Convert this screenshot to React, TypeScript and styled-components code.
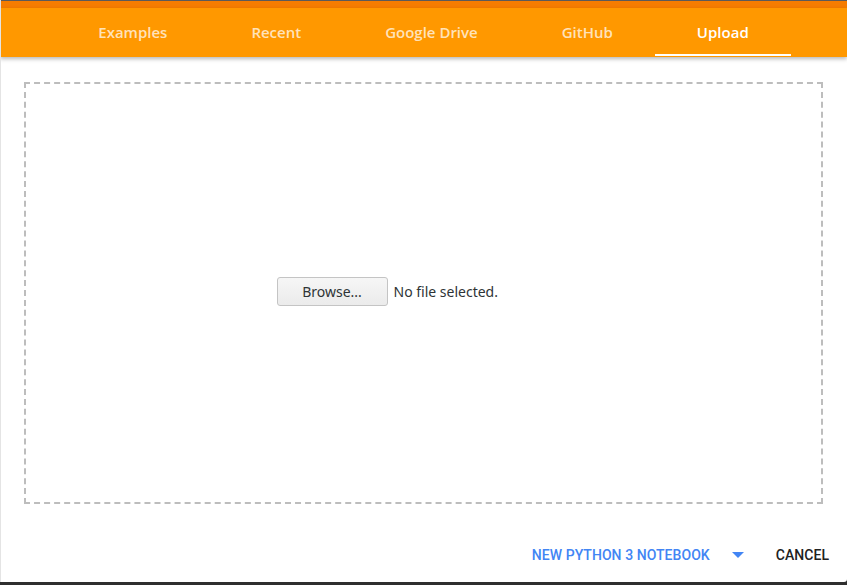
import React from 'react';
import styled, { createGlobalStyle } from 'styled-components';

const GlobalStyle = createGlobalStyle`
  html, body {
    margin: 0;
    padding: 0;
    background: #2f2f2f;
  }
  body {
    font-family: Roboto, "Liberation Sans", sans-serif;
  }
`;

const Dialog = styled.div`
  width: 847px;
  height: 582px;
  background: #ffffff;
  display: flex;
  flex-direction: column;
  border-left: 1px solid #e4e4e4;
  box-sizing: border-box;
  border-bottom-right-radius: 3px;
  overflow: hidden;
`;

const TopStrip = styled.div`
  height: 7px;
  background: #f57c00;
  border-top: 1px solid #5a5a5a;
`;

const TabBar = styled.nav`
  height: 49px;
  background: #ff9800;
  display: flex;
  justify-content: center;
  box-shadow: 0 2px 4px rgba(0, 0, 0, 0.28);
  position: relative;
  z-index: 1;
  margin-left: -1px;
`;

const Tab = styled.div<{ active?: boolean }>`
  position: relative;
  padding: 0 42px 2px;
  display: flex;
  align-items: center;
  font-family: "Open Sans", Roboto, sans-serif;
  font-size: 15px;
  font-weight: 600;
  color: ${p => (p.active ? '#ffffff' : 'rgba(255, 255, 255, 0.74)')};
  cursor: pointer;

  &::after {
    content: '';
    display: ${p => (p.active ? 'block' : 'none')};
    position: absolute;
    left: 0;
    right: 0;
    bottom: 1px;
    height: 2px;
    background: #ffffff;
  }
`;

const Body = styled.div`
  padding: 25px 24px 0 23px;
`;

const DropZone = styled.div`
  height: 422px;
  box-sizing: border-box;
  border: 2px dashed #bdbdbd;
  display: flex;
  align-items: center;
  justify-content: center;
`;

const FileInput = styled.div`
  width: 292px;
  display: flex;
  align-items: center;
  gap: 6px;
  margin: -4px 2px 0 0;
  font-family: "Noto Sans", "DejaVu Sans", sans-serif;
  font-size: 14px;
  color: #2e3436;
`;

const BrowseButton = styled.button`
  width: 111px;
  height: 29px;
  border: 1px solid #c4c4c4;
  border-radius: 3px;
  background: linear-gradient(#f6f6f6, #ebebeb);
  font-family: inherit;
  font-size: 14px;
  color: #2e3436;
  padding: 0;
`;

const Footer = styled.div`
  flex: 1;
  display: flex;
  justify-content: flex-end;
  align-items: center;
  padding: 24px 10px 0 0;
`;

const TextButton = styled.button<{ primary?: boolean }>`
  height: 36px;
  border: none;
  background: none;
  padding: 0 8px;
  font-family: Roboto, "Liberation Sans", sans-serif;
  font-size: 14px;
  font-weight: 500;
  letter-spacing: 0.05px;
  text-transform: uppercase;
  color: ${p => (p.primary ? '#4285f4' : '#212121')};
  display: flex;
  align-items: center;
`;

const Caret = styled.svg`
  width: 12px;
  height: 6px;
  margin: 0 24px 0 14px;
  fill: #4285f4;
`;

const tabs = ['Examples', 'Recent', 'Google Drive', 'GitHub', 'Upload'];

const App: React.FC = () => (
  <>
    <GlobalStyle />
    <Dialog>
      <TopStrip />
      <TabBar>
        {tabs.map(t => (
          <Tab key={t} active={t === 'Upload'}>
            {t}
          </Tab>
        ))}
      </TabBar>
      <Body>
        <DropZone>
          <FileInput>
            <BrowseButton>Browse...</BrowseButton>
            <span>No file selected.</span>
          </FileInput>
        </DropZone>
      </Body>
      <Footer>
        <TextButton primary>New Python 3 notebook</TextButton>
        <Caret viewBox="0 0 12 6">
          <path d="M0 0l6 6 6-6z" />
        </Caret>
        <TextButton>Cancel</TextButton>
      </Footer>
    </Dialog>
  </>
);

export default App;
